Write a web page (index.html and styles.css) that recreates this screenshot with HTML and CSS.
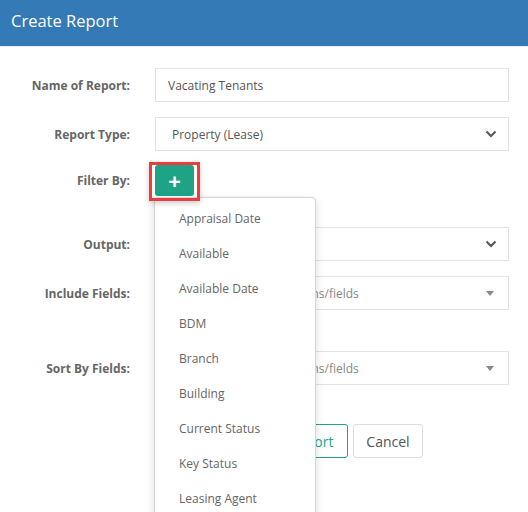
FILE: index.html
```html
<!DOCTYPE html>
<html>
<head>
    <meta charset="UTF-8">
    <title>Create Report</title>
    <link rel="stylesheet" href="styles.css">
</head>
<body>
    <div class="modal-header">
        <h1>Create Report</h1>
    </div>

    <form class="report-form">
        <div class="row row-name">
            <label>Name of Report:</label>
            <div class="control">
                <input class="field" type="text" value="Vacating Tenants">
            </div>
        </div>

        <div class="row row-type">
            <label>Report Type:</label>
            <div class="control">
                <div class="field select">
                    <span>Property (Lease)</span>
                    <svg class="chevron" width="12" height="8" viewBox="0 0 12 8"><path d="M1.5 1.5 L6 6 L10.5 1.5" fill="none" stroke="#555" stroke-width="2"/></svg>
                </div>
            </div>
        </div>

        <div class="row row-filter">
            <label>Filter By:</label>
            <div class="control">
                <div class="filter-wrap">
                    <button type="button" class="btn-add">+</button>
                    <span class="highlight"></span>
                    <ul class="filter-menu">
                        <li>Appraisal Date</li>
                        <li>Available</li>
                        <li>Available Date</li>
                        <li>BDM</li>
                        <li>Branch</li>
                        <li>Building</li>
                        <li>Current Status</li>
                        <li>Key Status</li>
                        <li>Leasing Agent</li>
                    </ul>
                </div>
            </div>
        </div>

        <div class="row row-output">
            <label>Output:</label>
            <div class="control">
                <div class="field select">
                    <span>Excel</span>
                    <svg class="chevron" width="12" height="8" viewBox="0 0 12 8"><path d="M1.5 1.5 L6 6 L10.5 1.5" fill="none" stroke="#555" stroke-width="2"/></svg>
                </div>
            </div>
        </div>

        <div class="row row-include">
            <label>Include Fields:</label>
            <div class="control">
                <div class="field select2">
                    <span class="placeholder">Select one or more columns/fields</span>
                    <b class="caret"></b>
                </div>
            </div>
        </div>

        <div class="row row-sort">
            <label>Sort By Fields:</label>
            <div class="control">
                <div class="field select2">
                    <span class="placeholder">Select one or more columns/fields</span>
                    <b class="caret"></b>
                </div>
            </div>
        </div>

        <div class="row row-actions">
            <label></label>
            <div class="control actions">
                <button type="button" class="btn btn-run">Create Report</button>
                <button type="button" class="btn btn-cancel">Cancel</button>
            </div>
        </div>
    </form>
</body>
</html>
```

FILE: styles.css
```css
:root {
    --header: #337ab7;
    --green: #1ea387;
    --border: #e2e2e2;
    --label: #666666;
    --text: #555555;
}

* {
    margin: 0;
    padding: 0;
    box-sizing: border-box;
}

body {
    background: #ffffff;
    font-family: "Open Sans", "Liberation Sans", sans-serif;
    color: var(--text);
    width: 528px;
    height: 512px;
    overflow: hidden;
}

.modal-header {
    background: var(--header);
    height: 47px;
    border-bottom: 1px solid #e5edf5;
    display: flex;
    align-items: center;
    padding-left: 11px;
}

.modal-header h1 {
    color: #ffffff;
    font-size: 16.5px;
    font-weight: normal;
    margin-top: -6px;
}

.report-form {
    padding: 21px 19px 0 0;
}

.row {
    display: flex;
    align-items: center;
}

.row label {
    width: 130px;
    flex: none;
    text-align: right;
    font-size: 12px;
    font-weight: bold;
    color: var(--label);
}

.control {
    flex: 1;
    margin-left: 25px;
}

.row-name { margin-bottom: 15px; }
.row-type { margin-bottom: 14px; }
.row-filter { margin-bottom: 31px; }
.row-output { margin-bottom: 15px; }
.row-include { margin-bottom: 41px; }
.row-sort { margin-bottom: 39px; }

.field {
    display: flex;
    align-items: center;
    width: 100%;
    height: 34px;
    border: 1px solid var(--border);
    background: #ffffff;
    font-family: inherit;
    font-size: 12px;
    color: var(--text);
    padding: 0 12px;
    outline: none;
}

.select {
    padding-left: 16px;
    justify-content: space-between;
}

.chevron {
    margin-right: -1px;
}

.select2 {
    justify-content: space-between;
}

.placeholder {
    color: #888888;
    font-size: 12px;
    white-space: nowrap;
}

.caret {
    width: 0;
    height: 0;
    border-left: 4px solid transparent;
    border-right: 4px solid transparent;
    border-top: 5px solid #888888;
    margin-right: 2px;
}

.filter-wrap {
    position: relative;
    width: 39px;
}

.btn-add {
    display: block;
    width: 39px;
    height: 31px;
    background: var(--green);
    color: #ffffff;
    border: none;
    border-radius: 3px;
    font-family: inherit;
    font-size: 22px;
    font-weight: bold;
    line-height: 31px;
}

.highlight {
    position: absolute;
    left: -6px;
    top: -3px;
    width: 51px;
    height: 39px;
    border: 3px solid #ee3b3b;
    box-shadow: 0 2px 6px rgba(0, 0, 0, 0.2);
    z-index: 3;
}

.filter-menu {
    position: absolute;
    top: 32px;
    left: -1px;
    width: 162px;
    list-style: none;
    background: #ffffff;
    border: 1px solid #d5d5d5;
    border-radius: 4px;
    box-shadow: 0 3px 8px rgba(0, 0, 0, 0.15);
    padding-top: 3px;
    z-index: 2;
}

.filter-menu li {
    height: 35px;
    line-height: 35px;
    padding-left: 24px;
    font-size: 12px;
    color: #666666;
    white-space: nowrap;
}

.actions {
    display: flex;
    gap: 5px;
    padding-left: 73px;
}

.btn {
    height: 34px;
    background: #ffffff;
    font-family: inherit;
    font-size: 14px;
    border-radius: 3px;
}

.btn-run {
    width: 120px;
    border: 1px solid var(--green);
    color: var(--green);
}

.btn-cancel {
    width: 70px;
    border: 1px solid #dddddd;
    color: var(--text);
}
```
